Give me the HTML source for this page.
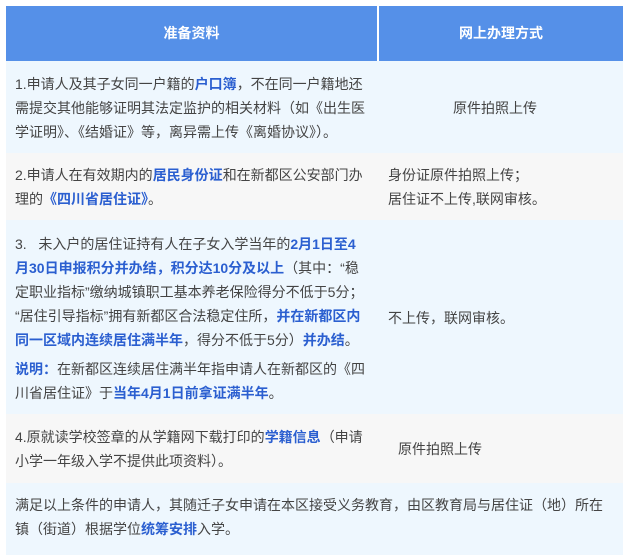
<!DOCTYPE html>
<html><head><meta charset="utf-8"><style>
body{margin:0;width:623px;height:555px;background:#fff;position:relative;overflow:hidden;font-family:"Liberation Sans","Noto Sans CJK SC",sans-serif;font-size:14px;color:#444;}
.r{position:absolute;left:6px;width:617px;}
.t{position:absolute;white-space:nowrap;line-height:24px;}
b{color:#2b5fd0;}
.h{background:#5590e8;color:#fff;font-weight:bold;top:6px;height:55px;}
</style></head><body>
<div class="r h"></div>
<div style="position:absolute;left:377px;top:6px;width:2px;height:55px;background:#fff"></div>
<div class="t" style="left:6px;width:371px;text-align:center;top:21px;color:#fff;font-weight:bold">准备资料</div>
<div class="t" style="left:379px;width:244px;text-align:center;top:21px;color:#fff;font-weight:bold">网上办理方式</div>

<div class="r" style="top:61px;height:92px;background:#eef7fe"></div>
<div class="t" style="left:15px;top:72px">1.申请人及其子女同一户籍的<b>户口簿</b>，不在同一户籍地还<br>需提交其他能够证明其法定监护的相关材料（如《出生医<br>学证明》、《结婚证》等，离异需上传《离婚协议》）。</div>
<div class="t" style="left:453px;top:96px">原件拍照上传</div>

<div class="r" style="top:153px;height:67px;background:#f7f7f7"></div>
<div class="t" style="left:15px;top:163px">2.申请人在有效期内的<b>居民身份证</b>和在新都区公安部门办<br>理的<b>《四川省居住证》</b>。</div>
<div class="t" style="left:388px;top:163px">身份证原件拍照上传；<br>居住证不上传,联网审核。</div>

<div class="r" style="top:220px;height:194px;background:#eef7fe"></div>
<div class="t" style="left:15px;top:232px">3.&nbsp;&nbsp;&nbsp;未入户的居住证持有人在子女入学当年的<b>2月1日至4<br>月30日申报积分并办结，积分达10分及以上</b>（其中：“稳<br>定职业指标”缴纳城镇职工基本养老保险得分不低于5分；<br>“居住引导指标”拥有新都区合法稳定住所，<b>并在新都区内<br>同一区域内连续居住满半年</b>，得分不低于5分）<b>并办结</b>。</div>
<div class="t" style="left:15px;top:357px"><b>说明：</b>在新都区连续居住满半年指申请人在新都区的《四<br>川省居住证》于<b>当年4月1日前拿证满半年</b>。</div>
<div class="t" style="left:388px;top:306px">不上传，联网审核。</div>

<div class="r" style="top:414px;height:69px;background:#f7f7f7"></div>
<div class="t" style="left:15px;top:425px">4.原就读学校签章的从学籍网下载打印的<b>学籍信息</b>（申请<br>小学一年级入学不提供此项资料）。</div>
<div class="t" style="left:398px;top:437px">原件拍照上传</div>

<div class="r" style="top:483px;height:72px;background:#eef7fe"></div>
<div class="t" style="left:15px;top:493px">满足以上条件的申请人，其随迁子女申请在本区接受义务教育，由区教育局与居住证（地）所在<br>镇（街道）根据学位<b>统筹安排</b>入学。</div>
</body></html>
